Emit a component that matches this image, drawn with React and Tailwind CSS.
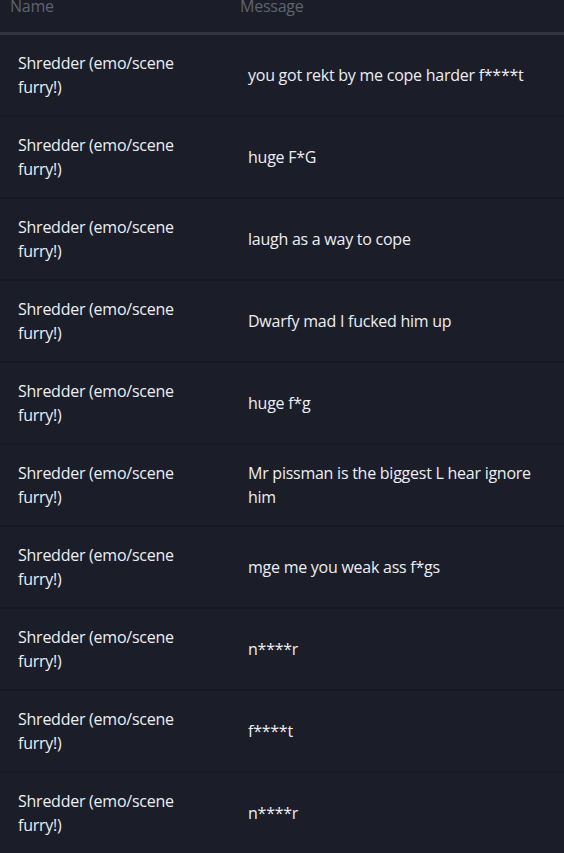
export default function App() {
  const rows = [
    "you got rekt by me cope harder f****t",
    "huge F*G",
    "laugh as a way to cope",
    "Dwarfy mad I fucked him up",
    "huge f*g",
    "Mr pissman is the biggest L hear ignore him",
    "mge me you weak ass f*gs",
    "n****r",
    "f****t",
    "n****r",
  ];
  return (
    <div
      className="min-h-[853px] w-[564px] overflow-hidden bg-[#1b1d29] text-[16px] leading-[24px] tracking-[-0.25px]"
      style={{ fontFamily: '"Open Sans", "Noto Sans", sans-serif' }}
    >
      <div className="-mt-[6px] flex border-b-[3px] border-[#34363f] pb-[14px] text-[#5f6370]">
        <div className="w-[230px] shrink-0 px-[10px]">Name</div>
        <div className="flex-1 px-[10px]">Message</div>
      </div>
      {rows.map((m, i) => (
        <div
          key={i}
          className="flex h-[82px] items-center border-b-2 border-[#171922] text-[#eceef3]"
        >
          <div className="w-[230px] shrink-0 px-[18px]">Shredder (emo/scene furry!)</div>
          <div className="flex-1 px-[18px]">{m}</div>
        </div>
      ))}
    </div>
  );
}
